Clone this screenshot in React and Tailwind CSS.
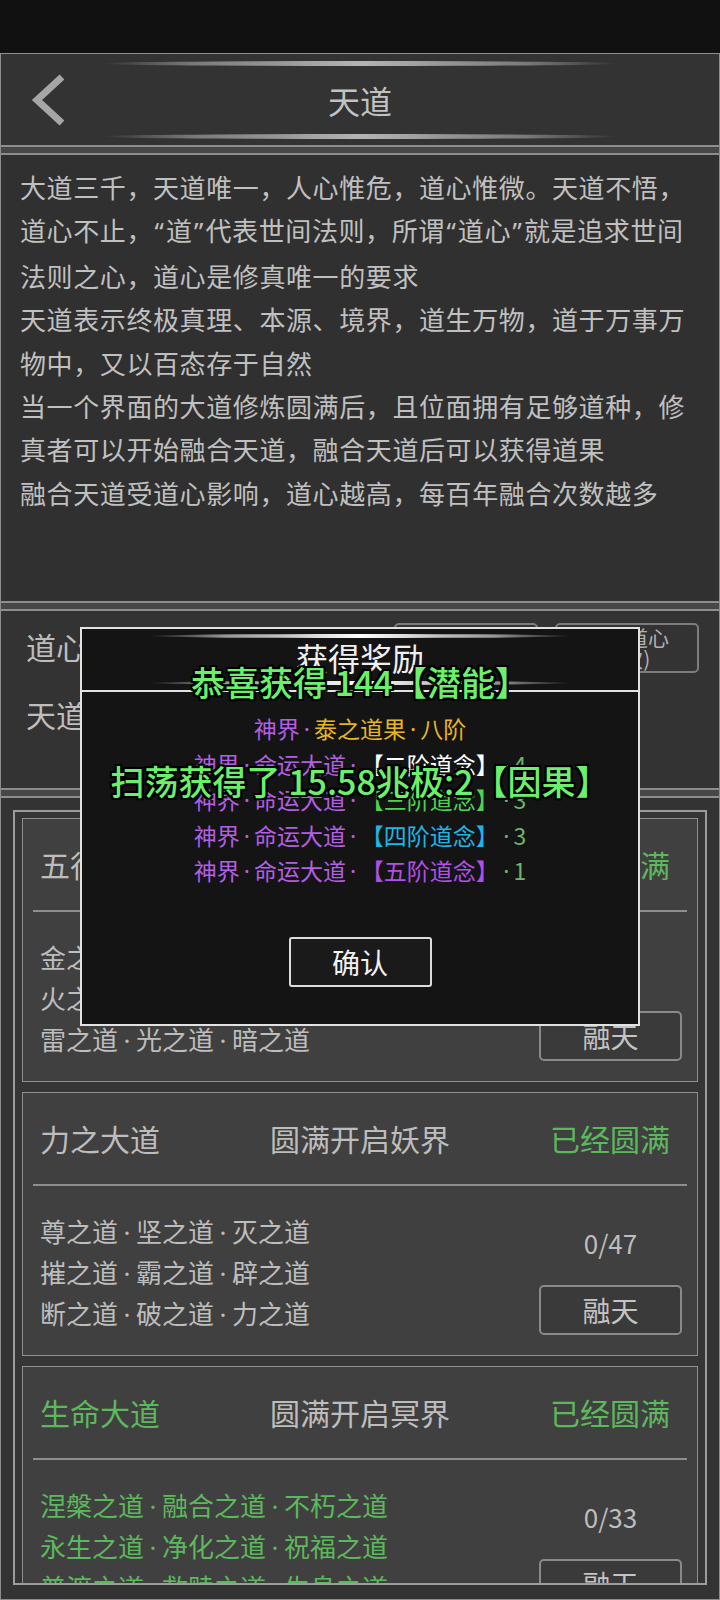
import React from "react";

const PURPLE = "text-[#b35fe4]";
const NUM = "text-[#6cb56c]";

const cards = [
  {
    name: "五行大道",
    open: "圆满开启人界",
    items: ["金之道·木之道·水之道", "火之道·土之道·风之道", "雷之道·光之道·暗之道"],
    count: "0/45",
    green: false,
  },
  {
    name: "力之大道",
    open: "圆满开启妖界",
    items: ["尊之道·坚之道·灭之道", "摧之道·霸之道·辟之道", "断之道·破之道·力之道"],
    count: "0/47",
    green: false,
  },
  {
    name: "生命大道",
    open: "圆满开启冥界",
    items: ["涅槃之道·融合之道·不朽之道", "永生之道·净化之道·祝福之道", "普渡之道·救赎之道·生息之道"],
    count: "0/33",
    green: true,
  },
];

const rewards = [
  [
    { t: "神界·", c: PURPLE },
    { t: "泰之道果·八阶", c: "text-[#e6b624]" },
  ],
  [
    { t: "神界·命运大道·", c: PURPLE },
    { t: "【二阶道念】", c: "text-white", b: true },
    { t: "·4", c: NUM },
  ],
  [
    { t: "神界·命运大道·", c: PURPLE },
    { t: "【三阶道念】", c: "text-[#4fd34f]", b: true },
    { t: "·3", c: NUM },
  ],
  [
    { t: "神界·命运大道·", c: PURPLE },
    { t: "【四阶道念】", c: "text-[#1fb6e4]", b: true },
    { t: "·3", c: NUM },
  ],
  [
    { t: "神界·命运大道·", c: PURPLE },
    { t: "【五阶道念】", c: "text-[#b24fe6]", b: true },
    { t: "·1", c: NUM },
  ],
];

// the CJK font draws · and quotes full width, the game uses narrow ones
function Dot({ m }) {
  return <span className={`${m} font-['Noto_Sans',sans-serif]`}>·</span>;
}

function Q({ children }) {
  return <span className="px-[1.5px] font-['Noto_Sans',sans-serif]">{children}</span>;
}

function withDots(text, m) {
  const parts = text.split("·");
  return parts.map((p, i) => (
    <React.Fragment key={i}>
      {i > 0 && <Dot m={m} />}
      {p}
    </React.Fragment>
  ));
}

// soft lens-shaped highlight line used on the title bars
function GlowLine({ id, width, height, color }) {
  return (
    <svg width={width} height={height} viewBox={`0 0 ${width} ${height}`} className="block">
      <defs>
        <linearGradient id={id} x1="0" x2="1" y1="0" y2="0">
          <stop offset="0" stopColor={color} stopOpacity="0" />
          <stop offset="0.18" stopColor={color} stopOpacity="0.55" />
          <stop offset="0.5" stopColor={color} stopOpacity="1" />
          <stop offset="0.82" stopColor={color} stopOpacity="0.55" />
          <stop offset="1" stopColor={color} stopOpacity="0" />
        </linearGradient>
      </defs>
      <ellipse cx={width / 2} cy={height / 2} rx={width / 2} ry={height / 2} fill={`url(#${id})`} />
    </svg>
  );
}

function DoubleLine() {
  return <div className="h-[10px] shrink-0 border-y-2 border-[#8d8d8d] bg-[#474747]" />;
}

function DaoCard({ card }) {
  const nameColor = card.green ? "text-[#5cb85c]" : "text-[#bdbdbd]";
  return (
    <div className="shrink-0 border border-[#8e8e8e] bg-[#404040]">
      <div className="grid h-[91px] grid-cols-3 items-center text-[30px]">
        <span className={`pl-[17px] ${nameColor}`}>{card.name}</span>
        <span className="justify-self-center text-[#bdbdbd]">{card.open}</span>
        <span className="justify-self-end pr-[27px] text-[#5cb85c]">已经圆满</span>
      </div>
      <div className="mx-[10px] h-[2px] bg-[#8e8e8e]" />
      <div className="flex h-[169px] justify-between">
        <div className={`pl-[17px] pt-[25px] text-[26px] leading-[39px] ${nameColor}`}>
          {card.items.map((it) => (
            <div key={it}>{withDots(it, "mx-[5.5px]")}</div>
          ))}
        </div>
        <div className="flex flex-col items-center pr-[15px] pt-[39px]">
          <span className="text-[26px] leading-[36px] text-[#bdbdbd]">{card.count}</span>
          <button className="mt-[24px] h-[50px] w-[143px] rounded-[5px] border-2 border-[#8a8a8a] bg-[#3a3a3a] text-[28px] text-[#c4c4c4]">
            融天
          </button>
        </div>
      </div>
    </div>
  );
}

export default function App() {
  const outline =
    "[text-shadow:-2px_-2px_0_#000,2px_-2px_0_#000,-2px_2px_0_#000,2px_2px_0_#000,0_2px_0_#000,0_-2px_0_#000,2px_0_0_#000,-2px_0_0_#000]";

  return (
    <div className="relative h-[1600px] w-[720px] overflow-hidden bg-[#111111] font-['Noto_Sans_CJK_SC',sans-serif]">
      <div className="h-[53px]" />

      <div className="flex h-[1547px] flex-col border border-[#8d8d8d] bg-[#333333]">
        {/* title bar */}
        <div className="flex h-[91px] shrink-0 flex-col items-center pt-[7px]">
          <GlowLine id="hdTop" width={518} height={5} color="#b4b4b4" />
          <div className="grid h-[68px] w-full grid-cols-[1fr_auto_1fr] items-center">
            <div className="pl-[25px]">
              <svg width="40" height="54" viewBox="0 0 40 54" className="block">
                <polyline
                  points="36,4 11,27 36,50"
                  fill="none"
                  stroke="#a6a6a6"
                  strokeWidth="7"
                  strokeLinejoin="miter"
                />
              </svg>
            </div>
            <span className="text-[32px] text-[#c2c2c2]">天道</span>
            <div />
          </div>
          <GlowLine id="hdBot" width={518} height={5} color="#b4b4b4" />
        </div>

        <DoubleLine />

        {/* description */}
        <div className="h-[446px] shrink-0 bg-[#303030] pl-[19px] pt-[10px] text-[26px] leading-[43.4px] tracking-[0.6px] text-[#c0c0c0]">
          <p>
            大道三千，天道唯一，人心惟危，道心惟微。天道不悟，
            <br />
            道心不止，<Q>“</Q>道<Q>”</Q>代表世间法则，所谓<Q>“</Q>道心<Q>”</Q>就是追求世间
            <br />
            法则之心，道心是修真唯一的要求
          </p>
          <p>
            天道表示终极真理、本源、境界，道生万物，道于万事万
            <br />
            物中，又以百态存于自然
          </p>
          <p>
            当一个界面的大道修炼圆满后，且位面拥有足够道种，修
            <br />
            真者可以开始融合天道，融合天道后可以获得道果
          </p>
          <p>融合天道受道心影响，道心越高，每百年融合次数越多</p>
        </div>

        <DoubleLine />

        {/* stats */}
        <div className="h-[177px] shrink-0 pt-[12px] text-[30px] text-[#bdbdbd]">
          <div className="flex h-[50px] items-center justify-between pl-[25px] pr-[20px]">
            <span className="-mt-[3px]">道心：1285</span>
            <div className="flex gap-[17px]">
              <button className="flex h-[50px] w-[144px] flex-col items-center justify-center rounded-[5px] border-2 border-[#7c7c7c] text-[21px] leading-[21px] text-[#b0b0b0]">
                <span>融合天道</span>
                <span>(0次)</span>
              </button>
              <button className="flex h-[50px] w-[144px] flex-col items-center justify-center rounded-[5px] border-2 border-[#7c7c7c] text-[21px] leading-[21px] text-[#b0b0b0]">
                <span>提升道心</span>
                <span>(3次)</span>
              </button>
            </div>
          </div>
          <div className="mt-[16px] flex h-[50px] items-center pl-[25px]">
            <span>天道：神界</span>
          </div>
        </div>

        <DoubleLine />

        {/* dao list */}
        <div className="min-h-0 flex-1 px-[12px] pb-[14px] pt-[12px]">
          <div className="flex h-full flex-col gap-[10px] overflow-hidden border-2 border-[#9c9c9c] bg-[#363636] px-[7px] pt-[6px]">
            {cards.map((c) => (
              <DaoCard key={c.name} card={c} />
            ))}
          </div>
        </div>
      </div>

      {/* reward popup */}
      <div className="absolute left-[80px] top-[627px] flex h-[399px] w-[560px] flex-col border-2 border-[#e2e2e2] bg-[#141414]">
        <div className="flex h-[63px] flex-col items-center border-b-2 border-[#e2e2e2] pt-[5px]">
          <GlowLine id="pTop" width={424} height={4} color="#ffffff" />
          <div className="h-[38px] text-[32px] leading-[38px] text-[#f0f0f0]">获得奖励</div>
          <div className="mt-[5px]">
            <GlowLine id="pBot" width={424} height={4} color="#ffffff" />
          </div>
        </div>
        <div className="flex flex-col items-center pt-[19px] text-[23px] leading-[34.6px]">
          {rewards.map((line, i) => (
            <div key={i}>
              {line.map((s, j) => (
                <span key={j} className={s.b ? `mx-[12px] ${s.c}` : s.c}>
                  {withDots(s.t, "mx-[4px]")}
                </span>
              ))}
            </div>
          ))}
          <button className="mt-[48px] h-[50px] w-[143px] rounded-[3px] border-2 border-[#dcdcdc] bg-[#1a1a1a] text-[28px] text-[#f2f2f2]">
            确认
          </button>
        </div>
      </div>

      {/* floating toasts */}
      <div
        className={`absolute left-0 right-0 top-[662px] text-center text-[34px] font-medium leading-[40px] text-[#6cf06c] ${outline}`}
      >
        恭喜获得 144【潜能】
      </div>
      <div
        className={`absolute left-0 right-0 top-[761px] text-center text-[34px] font-medium leading-[40px] text-[#6cf06c] ${outline}`}
      >
        扫荡获得了 15.58兆极:2【因果】
      </div>
    </div>
  );
}
